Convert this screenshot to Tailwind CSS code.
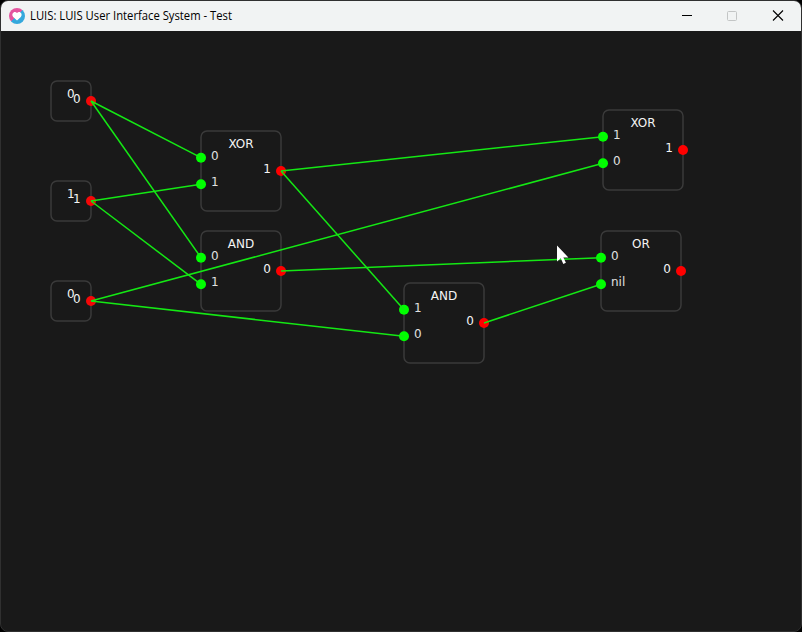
<!DOCTYPE html>
<html lang="en">
<head>
<meta charset="utf-8">
<title>LUIS: LUIS User Interface System - Test</title>
<script src="https://cdn.jsdelivr.net/npm/@tailwindcss/browser@4"></script>
</head>
<body class="bg-black overflow-hidden">
<div class="w-[802px] h-[632px] flex flex-col overflow-hidden rounded-[8px] border border-[#303030] bg-[#191919]">
  <header class="h-[30px] shrink-0 flex items-center bg-[#f1f3f3] text-black">
    <svg class="ml-2 size-4 shrink-0" viewBox="0 0 16 16">
      <defs><linearGradient id="g" x1="0" y1="0" x2="1" y2="1"><stop offset=".5" stop-color="#e4559f"/><stop offset=".5" stop-color="#35a8dc"/></linearGradient></defs>
      <circle cx="8" cy="8" r="8" fill="url(#g)"/>
      <path d="M8 12.600 4.200 9C2.300 6.600 4 4 6 4q1.300 0 2 1.200Q8.700 4 10 4c2 0 3.700 2.600 1.800 5Z" fill="#fff"/>
    </svg>
    <svg class="ml-[5px] w-[260px] h-[30px] overflow-visible" viewBox="0 0 260 30"><text x="0" y="19" textLength="202" lengthAdjust="spacingAndGlyphs" class="text-[12px] font-['Open_Sans','Noto_Sans',sans-serif]" fill="#000">LUIS: LUIS User Interface System - Test</text></svg>
    <div class="ml-auto flex items-center">
      <div class="w-[45px] flex justify-center"><svg class="size-[10px]" viewBox="0 0 10 10"><path d="M0 4.500h10" stroke="#000"/></svg></div>
      <div class="w-[45px] flex justify-center"><svg class="size-[10px]" viewBox="0 0 10 10"><rect x=".5" y=".5" width="9" height="9" rx="1" fill="none" stroke="#c3c5c5"/></svg></div>
      <div class="w-[47px] flex justify-center"><svg class="size-[10px] overflow-visible" viewBox="0 0 10 10"><path d="M0-.500 10 9.500M10-.500 0 9.500" stroke="#000" stroke-width="1.100"/></svg></div>
    </div>
  </header>
  <main id="canvas" class="relative grow -ml-px text-[#f4f4f4] text-[12px] leading-[14px] font-['DejaVu_Sans',sans-serif]"></main>
</div>
<script>
const TOP = 31, canvas = document.getElementById('canvas');
const constants = [[51,81,'0'],[51,181,'1'],[51,281,'0']];
const gates = [
  [201,131,'XOR','0','1','1'],[201,231,'AND','0','1','0'],[404,283,'AND','1','0','0'],
  [603,110,'XOR','1','0','1'],[601,231,'OR','0','nil','0']
];
const wires = [
  [91,101,201,157.67],[91,101,201,257.67],[91,201,201,184.33],[91,201,201,284.33],
  [91,301,603,163.33],[91,301,404,336.33],[281,171,603,136.67],[281,171,404,309.67],
  [281,271,601,257.67],[484,323,601,284.33]
];
let html = '', boxes = '', ports = '';
const dot = (x, y, c) => ports += `<circle cx="${x}" cy="${y}" r="5" fill="${c}"/>`;
const box = (x, y, s) => boxes += `<rect x="${x}" y="${y}" width="${s}" height="${s}" rx="6"/>`;
for (const [x, y, v] of constants) {
  html += `<div class="absolute size-[40px]" style="left:${x}px;top:${y-TOP}px">
    <span class="absolute left-[16px] top-[6px]">${v}</span><span class="absolute left-[22px] top-[11px]">${v}</span></div>`;
  box(x, y, 40);
  dot(x + 40, y + 20, '#f50808');
}
for (const [x, y, name, a, b, out] of gates) {
  html += `<div class="absolute size-[80px]" style="left:${x}px;top:${y-TOP}px">
    <span class="absolute inset-x-0 top-[6px] text-center">${name}</span>
    <span class="absolute left-[10px] top-[18px] text-[#e0e0e0]">${a}</span>
    <span class="absolute left-[10px] top-[44px] text-[#e0e0e0]">${b}</span>
    <span class="absolute right-[10px] top-[31px]">${out}</span></div>`;
  box(x, y, 80);
  dot(x, y + 26.67, '#00ff00'); dot(x, y + 53.33, '#00ff00'); dot(x + 80, y + 40, '#ff0000');
}
const lines = wires.map(([a,b,c,d]) => `<path d="M${a} ${b}L${c} ${d}"/>`).join('');
html += `<svg class="absolute left-0 top-0 w-[800px] h-[600px]" viewBox="0 31 800 600"><g fill="none" stroke="#3a3a3a" stroke-width="1.5">${boxes}</g>${ports}<g stroke="#14e814" stroke-width="1.5">${lines}</g>
  <path d="M557 245.500v16l3.800-3.300 2.500 5.800 2.600-1.200-2.500-5.300h5Z" fill="#fff"/></svg>`;
canvas.innerHTML = html;
</script>
</body>
</html>
